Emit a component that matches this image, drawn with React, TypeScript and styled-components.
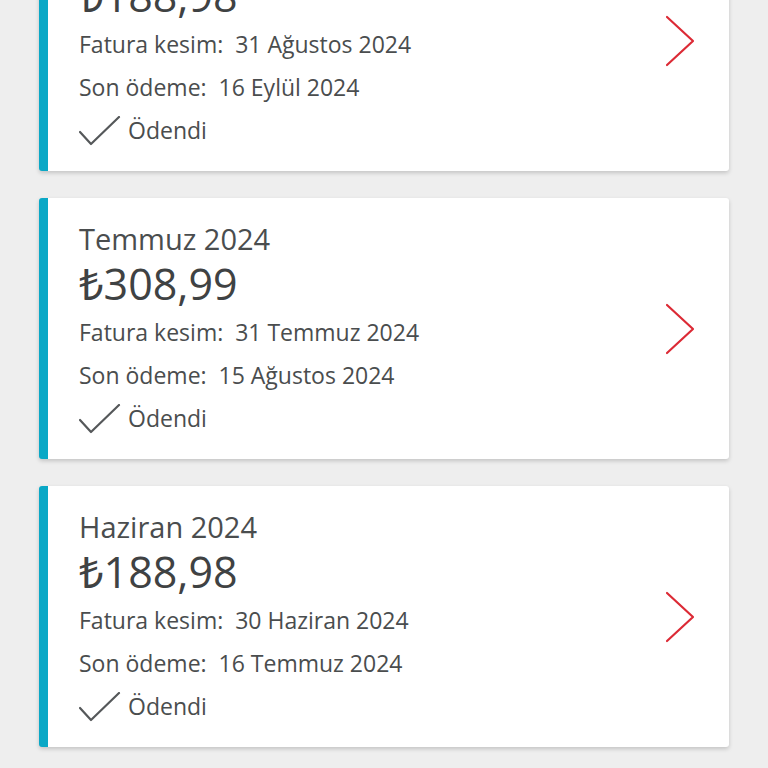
import styled, { createGlobalStyle } from 'styled-components';

const GlobalStyle = createGlobalStyle`
  html, body {
    margin: 0;
    padding: 0;
    background: #eeeeee;
    overflow: hidden;
  }
  body {
    font-family: 'Open Sans', 'Noto Sans', sans-serif;
    color: #4a4d4e;
  }
`;

const Screen = styled.div`
  height: 768px;
  overflow: hidden;
`;

const List = styled.div`
  display: flex;
  flex-direction: column;
  gap: 27px;
  padding: 0 39px;
  margin-top: -90px;
`;

const Card = styled.div`
  display: flex;
  align-items: center;
  height: 261px;
  box-sizing: border-box;
  background: #ffffff;
  border-left: 9px solid #0aa8c6;
  border-radius: 3px;
  box-shadow: 0 2px 4px rgba(0, 0, 0, 0.18);
  padding: 0 34px 0 31px;
`;

const Info = styled.div`
  flex: 1;
  display: flex;
  flex-direction: column;
  padding-top: 4px;
`;

const Month = styled.div`
  font-size: 29px;
  line-height: 36px;
`;

const Amount = styled.div`
  font-size: 43px;
  line-height: 54px;
  color: #3f4243;
`;

const Line = styled.div`
  font-size: 23px;
  line-height: 43px;
  white-space: pre;
`;

const Status = styled.div`
  display: flex;
  align-items: center;
  gap: 7px;
  font-size: 23px;
  line-height: 43px;
`;

type Bill = {
  month: string;
  amount: string;
  issued: string;
  due: string;
};

const bills: Bill[] = [
  { month: 'Ağustos 2024', amount: '188,98', issued: '31 Ağustos 2024', due: '16 Eylül 2024' },
  { month: 'Temmuz 2024', amount: '308,99', issued: '31 Temmuz 2024', due: '15 Ağustos 2024' },
  { month: 'Haziran 2024', amount: '188,98', issued: '30 Haziran 2024', due: '16 Temmuz 2024' },
];

function Check() {
  return (
    <svg width="42" height="30" viewBox="0 0 42 30" fill="none">
      <path d="M1 16 L12 28 L40 1" stroke="#55585a" strokeWidth="2.2" strokeLinecap="round" strokeLinejoin="round" />
    </svg>
  );
}

function Chevron() {
  return (
    <svg width="30" height="52" viewBox="0 0 30 52" fill="none">
      <path d="M2 2 L28 26 L2 50" stroke="#dc2a35" strokeWidth="2.2" strokeLinecap="round" strokeLinejoin="round" />
    </svg>
  );
}

export default function App() {
  return (
    <Screen>
      <GlobalStyle />
      <List>
        {bills.map((b) => (
          <Card key={b.month}>
            <Info>
              <Month>{b.month}</Month>
              <Amount>₺{b.amount}</Amount>
              <Line>{`Fatura kesim:  ${b.issued}`}</Line>
              <Line>{`Son ödeme:  ${b.due}`}</Line>
              <Status>
                <Check />
                Ödendi
              </Status>
            </Info>
            <Chevron />
          </Card>
        ))}
      </List>
    </Screen>
  );
}
